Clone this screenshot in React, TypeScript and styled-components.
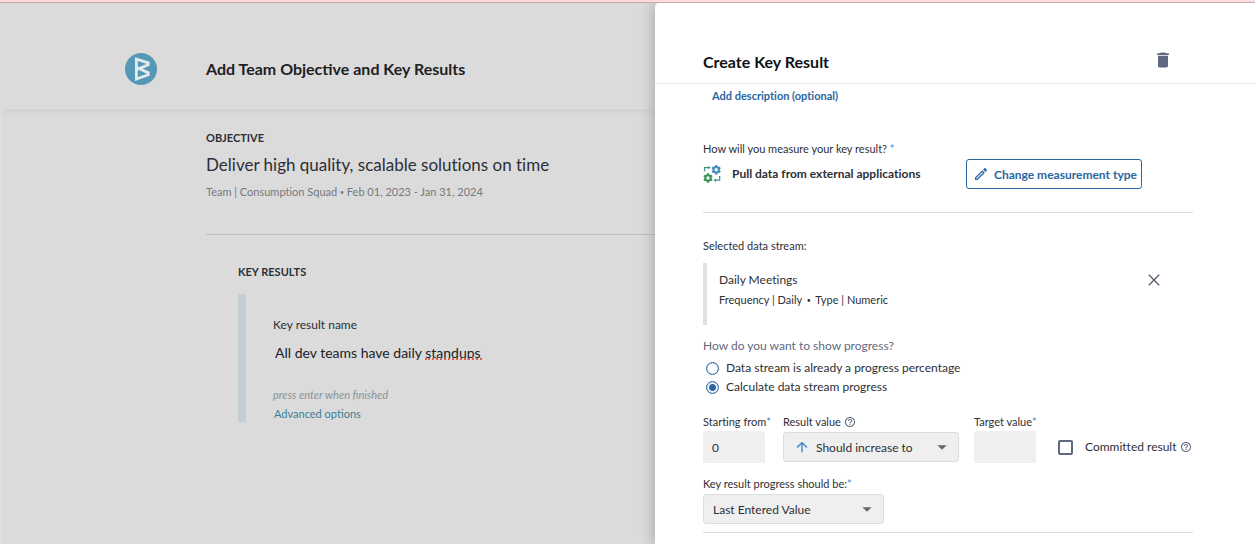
import React, { useState } from "react";
import styled, { createGlobalStyle } from "styled-components";
import {
  MdArrowDropDown,
  MdArrowUpward,
  MdDelete,
  MdHelpOutline,
  MdOutlineEdit,
} from "react-icons/md";

const color = {
  ink: "#2d2f36",
  link: "#2a66a0",
  slate: "#5f6880",
  shade: "#dbdbdb",
  line: "#dcdcdc",
  field: "#efefef",
};

const GlobalStyle = createGlobalStyle`
  *, *::before, *::after { box-sizing: border-box; }
  body {
    margin: 0;
    font-family: Lato, "Liberation Sans", sans-serif;
    color: ${color.ink};
  }
  button, input, select { font: inherit; color: inherit; }
  h1, h2, h3, p { margin: 0; }
  svg { display: block; flex: none; }
`;

const Shell = styled.div`
  min-height: 100vh;
  display: flex;
  flex-direction: column;
  background: ${color.shade};
`;

const TopStrip = styled.div`
  height: 3px;
  background: #fbdde0;
  border-bottom: 1px solid #cbabb0;
`;

const Columns = styled.div`
  flex: 1;
  display: flex;
`;

/* ---- dimmed page behind the drawer ---- */

const Page = styled.main`
  flex: 1;
  min-width: 0;
  border-left: 1px solid #e1e1e2;
`;

const PageHeader = styled.header`
  display: flex;
  align-items: center;
  gap: 49px;
  padding: 50px 0 24px 124px;
  box-shadow: 0 2px 8px rgba(0, 0, 0, 0.06);
`;

const PageTitle = styled.h1`
  font-size: 16px;
  line-height: 24px;
  font-weight: 700;
  color: #202124;
`;

const PageBody = styled.div`
  padding: 21px 0 24px 205px;
`;

const Overline = styled.h2`
  font-size: 11px;
  line-height: 16px;
  font-weight: 700;
`;

const ObjectiveName = styled.p`
  margin-top: 7px;
  font-size: 17px;
  line-height: 24px;
  font-variant-ligatures: none;
`;

const Meta = styled.p`
  margin-top: 7px;
  font-size: 11px;
  line-height: 16px;
  color: #77787b;
  font-variant-ligatures: none;
`;

const Bullet = styled.span<{ $gap: number }>`
  margin: 0 ${(p) => p.$gap}px;
  font-size: 7px;
  vertical-align: 1px;
`;

const KeyResults = styled.section`
  margin-top: 34px;
  padding: 29px 0 0 32px;
  border-top: 1px solid #bfbfbf;
`;

const KeyResultCard = styled.div`
  margin-top: 14px;
  padding: 23px 0 0 27px;
  border-left: 8px solid #c1d0d7;
`;

const SmallLabel = styled.label`
  display: block;
  font-size: 12px;
  line-height: 16px;
`;

const NameBox = styled.div`
  position: relative;
  margin-top: 7px;
`;

const NameInput = styled.input`
  display: block;
  width: 100%;
  height: 24px;
  padding: 0 2px;
  border: 0;
  background: none;
  font-size: 14px;
  color: #202124;
  outline: none;
`;

const SpellMark = styled.span`
  position: absolute;
  left: 152px;
  bottom: 4px;
  width: 57px;
  border-bottom: 2px dotted #e2604f;
`;

const Hint = styled.p`
  margin-top: 23px;
  font-size: 11px;
  line-height: 16px;
  font-style: italic;
  color: #8a9497;
`;

const TextLink = styled.a<{ $strong?: boolean }>`
  display: block;
  width: fit-content;
  font-size: 11px;
  line-height: 16px;
  font-weight: ${(p) => (p.$strong ? 700 : 400)};
  font-variant-ligatures: ${(p) => (p.$strong ? "none" : "normal")};
  color: ${(p) => (p.$strong ? color.link : "#3d8097")};
  text-decoration: none;
`;

const LinkSlot = styled.div<{ $top: number; $left: number }>`
  padding: ${(p) => p.$top}px 0 0 ${(p) => p.$left}px;
`;

/* ---- drawer ---- */

const Drawer = styled.aside`
  flex: 0 0 600px;
  background: #fff;
  border-top-left-radius: 4px;
  box-shadow: -2px 0 14px rgba(0, 0, 0, 0.22);
  clip-path: inset(0 0 0 -30px);
`;

const DrawerHeader = styled.header`
  display: flex;
  align-items: center;
  justify-content: space-between;
  padding: 46px 82px 8px 48px;
  border-bottom: 1px solid #ececec;
`;

const DrawerTitle = styled.h2`
  font-size: 16px;
  line-height: 26px;
  font-weight: 700;
  color: #101114;
`;

const IconButton = styled.button`
  display: flex;
  padding: 0;
  border: 0;
  background: none;
  color: ${color.slate};
  cursor: pointer;
`;

const DeleteButton = styled(IconButton)`
  margin-bottom: 4px;
`;

const DrawerBody = styled.form`
  padding: 0 62px 11px 48px;
`;

const Section = styled.section<{ $top: number; $bottom: number }>`
  padding: ${(p) => p.$top}px 0 ${(p) => p.$bottom}px;
  border-bottom: 1px solid ${color.line};
`;

const Caption = styled.p`
  font-size: 11px;
  line-height: 16px;
  font-variant-ligatures: none;
`;

const FieldLabel = styled(Caption).attrs({ as: "label" })<{ htmlFor?: string }>`
  display: flex;
  align-items: center;
  white-space: nowrap;
`;

const Required = styled.span`
  color: #3f86c4;
`;

const MeasureRow = styled.div`
  display: flex;
  align-items: center;
  gap: 11px;
  margin-top: 2px;
  padding-right: 51px;
`;

const MeasureName = styled.strong`
  flex: 1;
  font-size: 12px;
  line-height: 16px;
  font-weight: 700;
  font-variant-ligatures: none;
`;

const OutlineButton = styled.button`
  display: flex;
  align-items: center;
  gap: 5px;
  width: 176px;
  height: 30px;
  padding: 0 0 0 6px;
  border: 1px solid ${color.link};
  border-radius: 3px;
  background: #fff;
  color: ${color.link};
  font-size: 12px;
  font-weight: 700;
  white-space: nowrap;
  cursor: pointer;
`;

const StreamCard = styled.div`
  display: flex;
  justify-content: space-between;
  align-items: flex-start;
  margin-top: 9px;
  padding: 9px 33px 17px 12px;
  border-left: 4px solid #e0e0e0;
`;

const StreamName = styled.p`
  font-size: 12px;
  line-height: 16px;
  font-variant-ligatures: none;
`;

const StreamMeta = styled(Caption)`
  margin-top: 4px;
`;

const CloseButton = styled(IconButton)`
  margin-top: 2px;
`;

const RadioGroup = styled.fieldset`
  display: grid;
  gap: 3px;
  margin: 13px 0 0;
  padding: 0;
  border: 0;
  font-size: 12px;
  line-height: 16px;
  font-variant-ligatures: none;
`;

const Legend = styled.legend`
  padding: 0 0 6px;
  color: ${color.slate};
`;

const Choice = styled.label`
  display: flex;
  align-items: center;
  gap: 7px;
  padding-left: 3px;
`;

const Radio = styled.input.attrs({ type: "radio" })`
  appearance: none;
  width: 13px;
  height: 13px;
  margin: 0;
  border: 1px solid ${color.link};
  border-radius: 50%;
  background: #fff;
  box-shadow: inset 0 0 1px ${color.link};

  &:checked {
    background: radial-gradient(circle, ${color.link} 3px, #fff 4px);
  }
`;

const Fields = styled.div`
  display: flex;
  align-items: flex-start;
  margin-top: 19px;
`;

const Field = styled.div<{ $width: number; $after?: number }>`
  display: grid;
  grid-template-columns: 100%;
  flex: none;
  width: ${(p) => p.$width}px;
  margin-right: ${(p) => p.$after ?? 0}px;
`;

const NumberInput = styled.input`
  width: 100%;
  height: 32px;
  margin-top: 1px;
  padding: 0 9px;
  border: 0;
  border-radius: 2px;
  background: ${color.field};
  font-size: 12px;
`;

const SelectBox = styled.div`
  position: relative;
  margin-top: 2px;
`;

const Select = styled.select<{ $indent: number }>`
  appearance: none;
  display: block;
  width: 100%;
  height: 30px;
  padding: 0 28px 0 ${(p) => p.$indent}px;
  border: 1px solid #dddddd;
  border-radius: 3px;
  background: ${color.field};
  font-size: 12px;
`;

const Lead = styled.span`
  position: absolute;
  top: 7px;
  left: 11px;
  color: #3a82c4;
  pointer-events: none;
`;

const Caret = styled.span`
  position: absolute;
  top: 4px;
  right: 6px;
  color: #666;
  pointer-events: none;
`;

const HelpIcon = styled(MdHelpOutline)`
  margin-left: 3px;
  color: ${color.slate};
`;

const Committed = styled.label`
  display: flex;
  align-items: center;
  margin: 25px 0 0 22px;
  font-size: 12px;
  line-height: 16px;
  white-space: nowrap;
  font-variant-ligatures: none;
`;

const Checkbox = styled.input.attrs({ type: "checkbox" })`
  appearance: none;
  width: 15px;
  height: 15px;
  margin: 0 12px 0 0;
  border: 2px solid ${color.slate};
  border-radius: 2px;

  &:checked {
    background: ${color.slate};
  }
`;

const ProgressField = styled(Field)`
  margin-top: 13px;
`;

const Logo = () => (
  <svg width="32" height="32" viewBox="0 0 32 32" role="img" aria-label="Logo">
    <circle cx="16" cy="16" r="16" fill="#5598b6" />
    <path
      d="M11.4 6.2 L23.2 9.8 V11.8 L14 15.6 L23.2 19.6 V21.8 L11.4 26 Z"
      fill="none"
      stroke="#e3e9ec"
      strokeWidth="2.8"
      strokeLinejoin="miter"
    />
    <path d="M11.4 12.6 L16 15.6 L11.4 18.6 Z" fill="#e3e9ec" />
  </svg>
);

const teeth = [0, 60, 120, 180, 240, 300];

const Gear = ({ x, y, fill }: { x: number; y: number; fill: string }) => (
  <g transform={`translate(${x} ${y})`}>
    <circle r="2.7" fill="none" stroke={fill} strokeWidth="2" />
    {teeth.map((a) => (
      <rect key={a} x="-1.1" y="-4.7" width="2.2" height="1.8" fill={fill} transform={`rotate(${a})`} />
    ))}
  </g>
);

const DataSyncIcon = () => (
  <svg width="18" height="18" viewBox="0 0 18 18" aria-hidden="true">
    <Gear x={13.2} y={4.8} fill="#3f8dbb" />
    <Gear x={5} y={13} fill="#39935a" />
    <path d="M1.5 6.6 V2.6 H6" fill="none" stroke="#3a9183" strokeWidth="1.2" />
    <path d="M5.2 0.9 L7.6 2.6 L5.2 4.3 Z" fill="#3a9183" />
    <path d="M16.7 11 V15.2 H12.4" fill="none" stroke="#3a9183" strokeWidth="1.2" />
    <path d="M12.9 13.5 L10.6 15.2 L12.9 16.9 Z" fill="#3a9183" />
  </svg>
);

const CrossIcon = () => (
  <svg width="12" height="12" viewBox="0 0 12 12" aria-hidden="true">
    <path d="M0.8 0.8 L11.2 11.2 M11.2 0.8 L0.8 11.2" stroke="#555c70" strokeWidth="1.3" />
  </svg>
);

export default function App() {
  const [name, setName] = useState("All dev teams have daily standups");
  const [mode, setMode] = useState("calculate");
  const [start, setStart] = useState("0");
  const [target, setTarget] = useState("");

  return (
    <Shell>
      <GlobalStyle />
      <TopStrip />
      <Columns>
        <Page>
          <PageHeader>
            <Logo />
            <PageTitle>Add Team Objective and Key Results</PageTitle>
          </PageHeader>
          <PageBody>
            <Overline>OBJECTIVE</Overline>
            <ObjectiveName>Deliver high quality, scalable solutions on time</ObjectiveName>
            <Meta>
              Team | Consumption Squad <Bullet $gap={0}>•</Bullet> Feb 01, 2023 - Jan 31, 2024
            </Meta>
            <KeyResults>
              <Overline>KEY RESULTS</Overline>
              <KeyResultCard>
                <SmallLabel htmlFor="kr-name">Key result name</SmallLabel>
                <NameBox>
                  <NameInput
                    id="kr-name"
                    value={name}
                    spellCheck={false}
                    onChange={(e) => setName(e.target.value)}
                  />
                  {name.endsWith("standups") && <SpellMark />}
                </NameBox>
                <Hint>press enter when finished</Hint>
                <LinkSlot $top={3} $left={1}>
                  <TextLink href="#advanced">Advanced options</TextLink>
                </LinkSlot>
              </KeyResultCard>
            </KeyResults>
          </PageBody>
        </Page>

        <Drawer>
          <DrawerHeader>
            <DrawerTitle>Create Key Result</DrawerTitle>
            <DeleteButton type="button" aria-label="Delete">
              <MdDelete size={20} />
            </DeleteButton>
          </DrawerHeader>
          <DrawerBody>
            <LinkSlot $top={4} $left={9}>
              <TextLink $strong href="#description">
                Add description (optional)
              </TextLink>
            </LinkSlot>

            <Section $top={37} $bottom={23}>
              <Caption>
                How will you measure your key result? <Required>*</Required>
              </Caption>
              <MeasureRow>
                <DataSyncIcon />
                <MeasureName>Pull data from external applications</MeasureName>
                <OutlineButton type="button">
                  <MdOutlineEdit size={16} />
                  Change measurement type
                </OutlineButton>
              </MeasureRow>
            </Section>

            <Section $top={25} $bottom={8}>
              <Caption>Selected data stream:</Caption>
              <StreamCard>
                <div>
                  <StreamName>Daily Meetings</StreamName>
                  <StreamMeta>
                    Frequency | Daily <Bullet $gap={2}>•</Bullet> Type | Numeric
                  </StreamMeta>
                </div>
                <CloseButton type="button" aria-label="Remove data stream">
                  <CrossIcon />
                </CloseButton>
              </StreamCard>

              <RadioGroup>
                <Legend>How do you want to show progress?</Legend>
                <Choice>
                  <Radio
                    name="mode"
                    checked={mode === "percentage"}
                    onChange={() => setMode("percentage")}
                  />
                  Data stream is already a progress percentage
                </Choice>
                <Choice>
                  <Radio
                    name="mode"
                    checked={mode === "calculate"}
                    onChange={() => setMode("calculate")}
                  />
                  Calculate data stream progress
                </Choice>
              </RadioGroup>

              <Fields>
                <Field $width={62} $after={18}>
                  <FieldLabel htmlFor="start">
                    Starting from<Required>*</Required>
                  </FieldLabel>
                  <NumberInput id="start" value={start} onChange={(e) => setStart(e.target.value)} />
                </Field>
                <Field $width={176} $after={15}>
                  <FieldLabel htmlFor="direction">
                    Result value
                    <HelpIcon size={12} />
                  </FieldLabel>
                  <SelectBox>
                    <Select id="direction" $indent={32}>
                      <option>Should increase to</option>
                      <option>Should decrease to</option>
                    </Select>
                    <Lead>
                      <MdArrowUpward size={16} />
                    </Lead>
                    <Caret>
                      <MdArrowDropDown size={22} />
                    </Caret>
                  </SelectBox>
                </Field>
                <Field $width={62}>
                  <FieldLabel htmlFor="target">
                    Target value<Required>*</Required>
                  </FieldLabel>
                  <NumberInput id="target" value={target} onChange={(e) => setTarget(e.target.value)} />
                </Field>
                <Committed>
                  <Checkbox />
                  Committed result
                  <HelpIcon size={12} />
                </Committed>
              </Fields>

              <ProgressField $width={181}>
                <FieldLabel htmlFor="progress">
                  Key result progress should be:<Required>*</Required>
                </FieldLabel>
                <SelectBox>
                  <Select id="progress" $indent={9}>
                    <option>Last Entered Value</option>
                    <option>Average Value</option>
                  </Select>
                  <Caret>
                    <MdArrowDropDown size={22} />
                  </Caret>
                </SelectBox>
              </ProgressField>
            </Section>
          </DrawerBody>
        </Drawer>
      </Columns>
    </Shell>
  );
}
